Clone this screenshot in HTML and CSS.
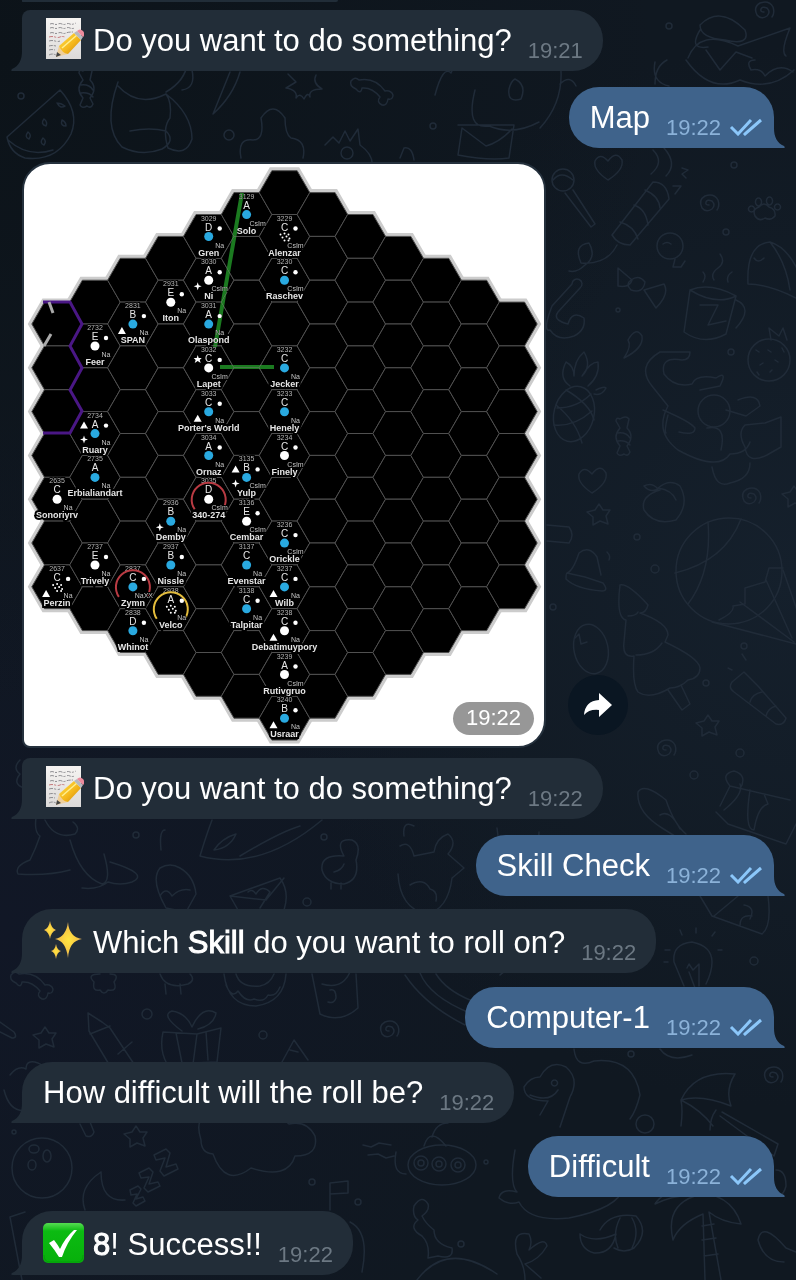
FILE: index.html
```html
<!DOCTYPE html>
<html lang="en">
<head>
<meta charset="utf-8">
<meta name="viewport" content="width=device-width, initial-scale=1">
<title>Chat</title>
<link rel="stylesheet" href="styles.css">
</head>
<body>
<svg class="defs" width="0" height="0" aria-hidden="true">
  <defs>
    <linearGradient id="pencil" x1="0" y1="0" x2="1" y2="1"><stop offset="0" stop-color="#ffe04a"/><stop offset=".55" stop-color="#f5b81c"/><stop offset="1" stop-color="#c9830c"/></linearGradient>
    <linearGradient id="paper" x1="0" y1="0" x2="0" y2="1"><stop offset="0" stop-color="#f6f4f2"/><stop offset="1" stop-color="#dcdad9"/></linearGradient>
    <radialGradient id="gold"><stop offset="0" stop-color="#ffe640"/><stop offset=".6" stop-color="#f8c944"/><stop offset="1" stop-color="#e5b25c"/></radialGradient>
    <linearGradient id="green" x1="0" y1="0" x2="0" y2="1"><stop offset="0" stop-color="#56dc52"/><stop offset=".2" stop-color="#0cbb12"/><stop offset="1" stop-color="#07b00b"/></linearGradient>
    <symbol id="memo" viewBox="0 0 41 42">
      <path d="M3 0h35v41H3z" fill="url(#paper)"/>
      <g fill="none" stroke="#77777c" stroke-width=".8" stroke-dasharray="4 1 2 1.500">
        <path d="M7 6q2-1 4 0t4 0 4 0 4 0 4 0 6-1M7 10q2-1 4 0t4 0 4 0 4 0 4 0 5 0M7 15q2-1 4 0t4 0 4 0 4 0 7-1M6 23q3-1 6 0t5 0M6 28q3-1 7 0M6 32q3-1 6 0M6 37q3-2 7 0"/>
        <path d="M6 19q3-1 6 0t5 0 5 0" stroke="#bd5d62"/>
      </g>
      <path d="M13 39l3-11 9 8z" fill="#efcf9b"/><path d="M13 39l1-5 4 3z" fill="#444"/>
      <path d="M16 28L31 15l7 7-13 14q-6-1-9-8z" fill="url(#pencil)"/>
      <path d="M19 30l15-13" stroke="#ffef8f" stroke-width="1.500"/>
      <path d="M31 15l3-2 6 6-2 3z" fill="#b6b9bf"/><path d="M34 13q3-3 6 0t0 6z" fill="#ed8b9c"/>
    </symbol>
    <symbol id="sparkles" viewBox="0 0 41 42">
      <g fill="url(#gold)"><path d="M25 2q1 15 14 17-13 2-14 19-2-17-13-19 11-2 13-17z"/><path d="M7 1q1 7 6 9-5 2-6 9-1-7-6-9 5-2 6-9z"/><path d="M13 24q1 6 5 7-4 1-5 8-1-7-5-8 4-1 5-7z"/></g>
    </symbol>
    <symbol id="done" viewBox="0 0 41 42">
      <rect x="0" y="1" width="41" height="40" rx="5" fill="url(#green)"/>
      <path d="M1 33q0 7 6 7h27q6 0 6-7" fill="none" stroke="#04900a" opacity=".6"/>
      <path d="M6 21l5-3q4 5 6 9Q22 16 31 8l3 0Q24 20 19 35l-3 0Q11 27 6 21z" fill="#fff"/>
    </symbol>
    <symbol id="ticks" viewBox="0 0 34 18">
      <path d="M2 9l7 7L22 2M15 15l1 1L32 2" fill="none" stroke="#8bc7fa" stroke-width="3"/>
    </symbol>
  </defs>
</svg>

<main class="chat">
  <svg class="wallpaper" viewBox="0 0 796 1280" preserveAspectRatio="xMidYMin slice" aria-hidden="true">
    <defs>
      <path id="d-star" d="M0-10l4 6 7 0-4 6 2 8-8-3-7 4 0-8-6-5 8-2z"/>
      <path id="d-swirl" d="M1 2q-4 0-3-3t6-1q4 4 0 8-6 4-10-1-4-8 3-12 9-3 13 4 2 6-1 10"/>
      <path id="d-heart" d="M0 13Q-15 3-13-6-8-15 0-6 8-17 14-7 16 3 0 13z"/>
      <path id="d-bone" d="M-18-7q-7-3-5-8 4-5 8-1 16-3 26 11 6-1 8 4 0 5-5 4-1 7-6 6-6-3-2-8-8-10-18-9-1 7-6 1z"/>
      <path id="d-candy" d="M-5-9l-4-7q0-4 4-2 6-4 9 0l-2 9q8 8 0 18l3 6q-2 5-6 2-5 3-7-1l3-7q-8-9 0-18zM-7-4q8-1 12 5M-7 4q8-1 12 4"/>
      <path id="d-paw" d="M-10 9q-3-7 4-9 5-6 10 0 7 2 6 9-4 5-10 2-6 4-10-2zM-14-1a3 3 0 1 0 1 0M-7-9a3 4 0 1 0 1 0M4-10a3 4 0 1 0 1 0M12-3a3 3 0 1 0 1 0"/>
      <path id="d-cloud" d="M-60-6q-9-28 18-26 22-6 32 8 17-18 38 2 18-4 26 12 4 20-20 20-7 24-44 12-26 20-38-14-12-1-12-14z"/>
    </defs>
    <!-- top -->
    <path d="M7 137L60 90q20 22 11 44-14 28-46 24-15-5-18-21zM8 140q20 18 45 10M44 119q4 3 2 7-6-2-2-7zM62 120q4 2 4 6-6 0-4-6zM28 132q4 3 1 7-5-2-1-7zM43 138q4 3 1 7-5-2-1-7zM57 103q4 0 8 3-5 3-8-3"/>
    <use href="#d-candy" x="88" y="89"/>
    <path d="M118 82q-16 45 4 65 20 10 40 2 14-8 4-18-16-4-36 0M118 86q20 22 48 8 26 20 26 45-6 18-24 9-6-20 2-30 2-16-4-24M176 20q28 50-10 72M192 70q4 18-10 20M230 72l-17 42q20-18 27-42"/>
    <path d="M288 74l8 8-10 6q12 2 10 10 4-6 8 1 4-8 6-2-2-8 12-8-10-6-6-14"/>
    <use href="#d-bone" x="374" y="96"/>
    <path d="M241 158q-4-20 12-18 12 0 8-22 12-18 24 0 0 16 6 20 16 2 12 20M325 145l8-8 6 6 6-12 5 10 8-12 2 16q14 10 12 22M341 153a6 6 0 1 0 12 0 6 6 0 1 0-12 0M435 95q8-30 16-22 4-12 18-4M475 90q-10 40 14 36 24 10 50-4M560 60q6 40-20 68M515 79q12 6 6 20-14 4-12-10 2-8 6-10M458 125h56l-5 33q-20 3-51-3l4-27 24 18q14-4 26-17M400 158l4-10q8-2 10 12M560 84q10-10 16 2"/>
    <path d="M700 25q20-20 45 5 6 16-20 10-25-2-25-15zM700 30q-12 20 8 17M688 58q12-30 50-12l52-18q-10 24-4 28M686 60q24 34 54 20 30 12 54-10M706 50l14 20 16-18 16 6M755 60q-10 0-4 10 10-2 14 6 14-14 28-4M655 62q-4 20 14 24M655 84q0-18 12-24"/>
    <use href="#d-heart" x="608" y="167"/><use href="#d-swirl" x="763" y="10"/><use href="#d-swirl" x="708" y="203"/><use href="#d-paw" x="765" y="207"/>
    <circle cx="563" cy="180" r="11"/><path d="M553 180q8-10 20 0M565 193l26 34 4-3-22-34M612 235l41-53q14 0 16 17l-39 46q-12 0-18-10zM620 222q14 4 18 17M634 205q12 4 14 20M645 190q14 6 15 18M617 245q-10 20-36 18-8-18 8-20 8 14-4 22-8 8-16 6"/>
    <path d="M653 150q12 12-2 24M664 148q14 16 2 28M682 168l6 2-6 4 4 4M673 186l8 0-6 8"/>
    <circle cx="670" cy="246" r="13"/><path d="M663 244q4-3 8 0M675 259l-2 8 8 0 4-6M618 268l14 12q-2 8-14 6zM644 290l20-6q6 10-8 24zM631 280q8-6 14 2-2 12-14 8-6-6 0-10"/>
    <path d="M748 284q-2-40 22-42 20 6 32 38M748 284q20 0 48 14M770 242q16 20 20 48M754 258q4 6 10 0"/>
    <!-- right column -->
    <path d="M690 290l-6 42q20 14 42 2l10-38M690 290q20-8 46 6-20 10-46-6M736 300q18 8 0 28M700 305l18 0-10 20 18-4M703 282q4-6 0-10M714 280q-4-6 4-12t2-14M728 282q-2-6 4-10"/>
    <path d="M550 330q-8 2 2-24l20-22a5 5 0 1 1 8 4l-22 24q-6 8 10 12 4-14 16-6 2 12-10 18-16 6-24-6M628 340q8-14 14-4 2 12-18 22 8-12 4-18z"/>
    <path d="M690 352h-30q-24 14-8 34l16 20q-14 26 10 44 40 22 52 4 16 0 20-12M690 352q0 8-8 8-22-4-18 14 10 14 28 10 4-10 24-6 12-8 4 8l-20 4M707 428q20-4 14 22M663 410q28 12 32 18 0 8-16 4M668 415q-4 16-2 18M745 425l20-2 16-6 0 30-14 8q-20 10-22-8-8-14 0-22M738 400q20-8 22 6l-14 10-20-6M712 467q4 22 18 16 20-4 20-20"/>
    <circle cx="714" cy="411" r="16"/><circle cx="769" cy="360" r="21"/><path d="M771 340l-2-12 10 8 4-8 4 12M756 350l3 2M768 350l3 2M760 365l3-2M775 360l3 2M770 372l2-2M782 348l2 4M757 372l2 3"/>
    <ellipse cx="574" cy="414" rx="20" ry="28" transform="rotate(14 574 414)"/><path d="M556 405q20 16 26 38M566 390q24 14 28 30M554 425q20 2 38-14M557 408q20 0 34-14M570 386q-12-8-4-24 8 4 8 14 0-16 10-24 8 14-2 24 8-14 16-14 2 14-10 24M596 390q8-4 10-2-4 8-12 6"/>
    <use href="#d-candy" x="625" y="437"/><use href="#d-heart" x="592" y="480"/><use href="#d-star" x="599" y="514"/><use href="#d-swirl" x="750" y="496"/><use href="#d-star" x="794" y="496"/>
    <path d="M660 490q-20 6-16 20 10 16 32 10 14-16 4-34-10-8-22 2 14 2 18 12M644 486q8-4 14 3-8 4-14-3M547 525l22 2q6 8 0 16l-22-2"/>
    <circle cx="729" cy="571" r="53"/><path d="M708 522q4 50-20 82M741 519q-16 42-66 54M719 620q16-8 14-14l12-2 0-16 20-6 4-14 14 0M783 570l14 40M766 580l26 58M740 602l54 40M712 622l84 22"/>
    <path d="M567 573l18 4 18 6q6 8-1 8-26-2-36-12 0-6 1-6q6-2 12-20 10-8 18 4 4 18 4 18M607 552q4 4 2 8"/>
    <ellipse cx="591" cy="649" rx="17" ry="25" transform="rotate(-12 591 649)"/><path d="M575 638l4-4 2 10 6-2"/>
    <path d="M620 585q8-2 28 20-2 8-8 8 28 10 28 22l-3 7q34 16 35 26 0 10-12 12-8 8-18 8-20 12-32 4-6-8-4-36-12 2-10-14l2-22q-10-2-6-35M628 616q8 0 10-4M636 655q18 0 26-12M668 690l14 20 8-6-9-19M732 682l12-10 14 14 28 32q-2 8-10 6l-42-32q-6-4-2-10zM762 692q-10 2-12 10M776 706q-8 2-10 10M742 654l4 6M728 668l4 2"/>
    <use href="#d-star" x="708" y="725"/><use href="#d-swirl" x="665" y="748"/>
    <!-- lower part -->
    <path d="M20 760q-8 8 0 14-8 10 4 14-4 10 6 14-4 12 6 16-2 14 4 18-4 12-10 24-16 6-12 14 30 2 52-4M45 820q10 20 30 14 6-6-2-12M70 840q10 36 32 44 10-2 2-30M110 862q40 12 22 20-12 4-24 0-10 8-26 6M165 830q-6 0-4 20M212 820q-6 16-12 36 60 16 122-36M214 850q8-12 22-16-6 14-22 16M240 856q40-24 60-30"/>
    <path d="M180 868q14 8 16 26l-10 18-20-4q-16-28-6-40 10-6 20 0zM160 896q6-10 12 0 8-8 18-6M230 896l50-18q10 14 4 32M230 896l8 14M248 892q4-4 8 2 6-10 14-2l-10 16M230 896l36 4 18-22M322 870q-2-16 22-14-10-18 8-16 10 4 4 20 4 20-12 24-18 0-22-14zM331 883v6M341 883v6M334 872q8-2 10-8"/>
    <path d="M400 846q10-6 14 10l20-4q2-14 14-18 10 8 0 20l16 14-12 10q-4 32-26 36-26-6-28-40M410 885q14-8 20 4 8 2 6 12M414 826q-12-6-10 10M497 828q4 40 20 34 22 0 22-30"/>
    <path d="M638 792q6-10 28 8 8 24 20 34M638 792q-2 20 24 36l16 10M660 815q10-6 20 14M720 806l10-20 60 14M716 812l12 12 58 20 10-20M730 786q-10-12 4-15 14 4 6 18M724 810q20-16 16-26M750 790q-6 40 4 40 4-24 14-26l-4-10"/>
    <path d="M700 896l12 20 50 18q10-8 6-38M714 916l24-20M740 926q0-12 12-10M744 905q12 2 6 14M684 986l-10-24q-2-18 18-20 20 4 20 20 0 10-6 22M687 968l2-4 4 6 6-6 0 22M689 972l6 16M696 928v5M680 930l2 5M665 950h5M664 962h4M718 950h4M712 936l3-4"/>
    <use href="#d-bone" x="34" y="990"/><path d="M100 974q-14 0-6 8-2 10 6 8 4 6 8 0 10 2 6-8 6-8-4-8M160 974q6 16 28 10 8-4 2-10M165 984l1 10M180 984l1 10"/>
    <path d="M224 974q4 32 32 32 28-4 30-32M236 974q4 14 24 12 10-2 14-12M226 985q6 14 12 6 8 12 16 8 10 4 14-4 8 2 12-8M312 974l8 40q20 10 38-6l-2-34M322 984q20 6 28-12M330 990q6-2 6 8-2 6-8 4M405 975q20 30 60 50M420 973q10 24 50 40M436 974q10 16 34 26M500 975q8-8 20-5M500 990l-20 10"/>
    <use href="#d-star" x="45" y="1037"/><path d="M0 1022l14 10q4 6-2 6l-12-6M88 1013l14 9 8 6 24 36M88 1013l1 18 24 40M90 1034q10-4 20-8M118 1054l14-12M163 1032l34 2 24-6-4 34-50 2q-8-14-4-32zM197 1034l-4 30M176 1033l6 30M182 1031q-22-16-10-20 14 2 20 16 10-22 24-14-2 12-18 16M206 1032l2 28M282 1062l12-22 14 20M290 1050l8 2"/>
    <use href="#d-swirl" x="388" y="1029"/><use href="#d-swirl" x="772" y="1075"/>
    <circle cx="42" cy="1168" r="30"/><ellipse cx="34" cy="1149" rx="5" ry="4"/><ellipse cx="47" cy="1156" rx="4" ry="6"/><ellipse cx="32" cy="1165" rx="4" ry="5"/>
    <path d="M80 1124l6 12q6 2 8-4l-4-10M10 1075q8-10 16-6 0-10 12-6 6 2 4 8M4 1090q6 24 24 20M101 1172q-24 16-16 38M101 1172q0 30 24 28M130 1190l8-4 3 3-5 10 7-2 2 4-9 5-3-3 4-9-6 1zM139 1173l10-5 4 4-4 12 9-2 2 4-12 6-4-4 5-11-8 1zM154 1155l12-6 4 4-4 14 10-3 2 5-14 7-4-5 5-13-9 2z"/>
    <use href="#d-star" x="136" y="1136"/><use href="#d-cloud" x="261" y="1146"/>
    <path d="M363 1145l8 2 8-4 12 2M368 1155l10-1 8 4 8-2M330 1210v-27l18-2v12l-18 1M350 1222q20 10 12 50M10 1217l15-5M10 1217l12 63M396 1152q-4 22 10 22"/>
    <ellipse cx="442" cy="1165" rx="34" ry="20"/><path d="M424 1146q6-20 22 0M432 1137q4-14 16-14"/>
    <g><circle cx="421" cy="1163" r="7"/><circle cx="439" cy="1164" r="7"/><circle cx="458" cy="1165" r="7"/><circle cx="421" cy="1163" r="3"/><circle cx="439" cy="1164" r="3"/><circle cx="458" cy="1165" r="3"/></g>
    <path d="M414 1206q8-12 14-2 2 6-6 12 4 8 12 14 0 14 18 18 2 12-14 8l-10 2q2-14-6-22-14-8-4-16-6-4-4-14M417 1280q30-40 80-6M525 1280q0-14-8-26-6-24 12-20 4 8 0 16 16-14 18-4-8 14-22 18l16 14"/>
    <path d="M540 1115l8-14q-24 0-24-14 6-10 16-10 10-18 26-10 14 12 4 30l-10 30M554 1080a3 3 0 1 0 1 0M530 1095q20 8 28-5M574 1049q2 20 20 12 40-4 46 34-4 16-10 24M515 1150q-6 34 2 42-16-4-18 6 10 8 20 4 10 20 50 16 50-10 54-30M660 1049q10 14 32 6"/>
    <circle cx="645" cy="1124" r="9"/><path d="M735 1074q-40-4-54 26 2 10 0 26M681 1100q20-6 50 6-6-16 4-32M681 1100q20 10 32 26M716 1110q-6 8-6 20M722 1112l56 32-4 12-54-40"/>
    <path d="M580 1234q14 10 36 0-4 20-22 19-14-4-14-19M600 1230q10-18 36-14 14 16-2 32-10 6-20 0M620 1218q-8 16-2 30M632 1218q8 14 0 30M705 1280l-2-66q-24 10-30 26-8-34 22-44-20-2-40 8 10-16 36-12 40 0 50 32-20-2-32-12l12 68M702 1226l12-2M702 1240l14-2M704 1256l14-2M758 1240q4-20 28 8l10 4M758 1240q6 22 26 22M770 1190q12 12 16-4 0-16-10-16"/>
    <!-- specks -->
    <g><circle cx="21" cy="96" r="3"/><circle cx="229" cy="135" r="5"/><circle cx="433" cy="126" r="3"/><circle cx="669" cy="26" r="3"/><circle cx="734" cy="165" r="3"/><circle cx="726" cy="232" r="3"/><circle cx="618" cy="310" r="2"/><circle cx="731" cy="352" r="3"/><circle cx="637" cy="537" r="3"/><circle cx="655" cy="569" r="4"/><circle cx="553" cy="607" r="3"/><circle cx="744" cy="646" r="3"/><circle cx="706" cy="683" r="3"/><circle cx="740" cy="753" r="4"/><circle cx="136" cy="835" r="3"/><circle cx="324" cy="837" r="3"/><circle cx="307" cy="902" r="4"/><circle cx="694" cy="775" r="4"/><circle cx="754" cy="961" r="4"/><circle cx="147" cy="1014" r="5"/><circle cx="263" cy="1035" r="4"/><circle cx="14" cy="1132" r="2"/><circle cx="312" cy="1182" r="3"/><circle cx="358" cy="1202" r="3"/><circle cx="461" cy="1244" r="3"/><circle cx="486" cy="1162" r="2"/><circle cx="631" cy="1054" r="3"/></g>
  </svg>

  <div class="thread">
    <div class="cutoff"></div>

    <div class="row">
      <article class="bubble bubble--in bubble--joined">
        <p class="text"><svg class="emoji" role="img" aria-label="memo"><use href="#memo"/></svg>Do you want to do something?</p>
        <time class="time">19:21</time>
      </article>
    </div>

    <div class="row row--out row--wide">
      <article class="bubble bubble--out">
        <p class="text">Map</p>
        <time class="time">19:22</time><svg class="ticks" role="img" aria-label="Read"><use href="#ticks"/></svg>
      </article>
    </div>

    <div class="row row--photo">
      <figure class="photo">
        <svg id="map" class="map" viewBox="24 165 520 582" role="img" aria-label="Star map"></svg>
        <time class="photo-time">19:22</time>
      </figure>
      <button class="forward" type="button" aria-label="Forward">
        <svg viewBox="0 0 30 26"><path d="M16 1l13 12-13 12v-7Q6 17 1 23 2 9 16 8z" fill="#fff"/></svg>
      </button>
    </div>

    <div class="row row--tight">
      <article class="bubble bubble--in bubble--joined">
        <p class="text"><svg class="emoji" role="img" aria-label="memo"><use href="#memo"/></svg>Do you want to do something?</p>
        <time class="time">19:22</time>
      </article>
    </div>

    <div class="row row--out row--wide">
      <article class="bubble bubble--out">
        <p class="text">Skill Check</p>
        <time class="time">19:22</time><svg class="ticks" role="img" aria-label="Read"><use href="#ticks"/></svg>
      </article>
    </div>

    <div class="row row--near">
      <article class="bubble bubble--in bubble--tall">
        <p class="text"><svg class="emoji" role="img" aria-label="sparkles"><use href="#sparkles"/></svg>Which <strong>Skill</strong> do you want to roll on?</p>
        <time class="time">19:22</time>
      </article>
    </div>

    <div class="row row--out">
      <article class="bubble bubble--out">
        <p class="text">Computer-1</p>
        <time class="time">19:22</time><svg class="ticks" role="img" aria-label="Read"><use href="#ticks"/></svg>
      </article>
    </div>

    <div class="row">
      <article class="bubble bubble--in">
        <p class="text">How difficult will the roll be?</p>
        <time class="time">19:22</time>
      </article>
    </div>

    <div class="row row--out row--near">
      <article class="bubble bubble--out">
        <p class="text">Difficult</p>
        <time class="time">19:22</time><svg class="ticks" role="img" aria-label="Read"><use href="#ticks"/></svg>
      </article>
    </div>

    <div class="row">
      <article class="bubble bubble--in bubble--tall">
        <p class="text"><svg class="emoji" role="img" aria-label="check mark"><use href="#done"/></svg><strong>8</strong>! Success!!</p>
        <time class="time">19:22</time>
      </article>
    </div>
  </div>
</main>
<script src="map.js"></script>
</body>
</html>
```
FILE: styles.css
```css
* {
  box-sizing: border-box;
}

body {
  margin: 0;
  background: #101923;
  color: #fff;
  font-family: "Liberation Sans", Arial, sans-serif;
}

.defs {
  position: absolute;
}

.chat {
  position: relative;
  min-height: 100vh;
  overflow: hidden;
  background:
    radial-gradient(circle at 0 4%, #0c1319 0, transparent 45%),
    radial-gradient(circle at 100% 45%, #15202c 0, transparent 50%),
    radial-gradient(circle at 0 72%, #111726 0, transparent 45%),
    #101821;
}

.wallpaper {
  position: absolute;
  inset: 0;
  width: 100%;
  height: 100%;
  fill: none;
  stroke: #202b38;
  stroke-width: 1.5;
  stroke-linecap: round;
  stroke-linejoin: round;
}

.thread {
  position: relative;
  padding: 0 22px 4px;
}

.cutoff {
  width: 42%;
  height: 2px;
  margin-bottom: 8px;
  border-radius: 0 0 20px 4px;
  background: #212d38;
}

.row {
  display: flex;
  margin-top: 14px;
}

.cutoff + .row {
  margin-top: 0;
}

.row--out {
  justify-content: flex-end;
}

.row--wide {
  margin-top: 16px;
}

.row--near {
  margin-top: 13px;
}

.row--tight {
  margin-top: 10px;
}

.row--photo {
  align-items: flex-end;
  gap: 22px;
}

.bubble {
  position: relative;
  display: flex;
  align-items: flex-end;
  padding: 13px 20px 8px 21px;
  border-radius: 30px;
}

.bubble--in {
  border-bottom-left-radius: 0;
  background: #222d38;
}

.bubble--joined {
  border-top-left-radius: 8px;
}

.bubble--out {
  padding-right: 11px;
  border-bottom-right-radius: 0;
  background: #3f638b;
}

.bubble--tall {
  padding-top: 16px;
}

.bubble::after {
  content: "";
  position: absolute;
  bottom: 0;
  width: 12px;
  height: 20px;
  background: inherit;
}

.bubble--in::after {
  left: -11px;
  clip-path: path("M12 0H11C11 9 8 15 1 18Q-1 20 2 20H12Z");
}

.bubble--out::after {
  right: -11px;
  clip-path: path("M0 0H1C1 9 4 15 11 18Q13 20 10 20H0Z");
}

.text {
  margin: 0;
  padding-bottom: 4px;
  font-size: 31px;
  line-height: 36px;
}

.text strong {
  font-weight: 400;
  -webkit-text-stroke: 1px currentColor;
}

.emoji {
  width: 41px;
  height: 42px;
  margin: -8px 9px -4px 0;
  vertical-align: -5px;
}

.time {
  margin-left: 16px;
  color: #6c7883;
  font-size: 22px;
  line-height: 24px;
}

.bubble--out .time {
  color: #8bb2d9;
}

.ticks {
  width: 34px;
  height: 18px;
  margin: 0 0 4px 8px;
}

.photo {
  position: relative;
  flex: 0 1 524px;
  margin: 0;
  overflow: hidden;
  border: 2px solid #25313d;
  border-radius: 28px 28px 28px 8px;
  background: #fff;
}

.photo-time {
  position: absolute;
  right: 10px;
  bottom: 11px;
  padding: 2px 13px 3px;
  border-radius: 17px;
  background: #979797;
  font-size: 22px;
  line-height: 28px;
}

.forward {
  display: grid;
  flex: none;
  place-items: center;
  width: 60px;
  height: 60px;
  margin-bottom: 13px;
  padding: 0;
  border: 0;
  border-radius: 50%;
  background: #0a1622;
}

.forward svg {
  width: 30px;
  height: 26px;
}

.map {
  display: block;
  width: 100%;
  font-family: "Liberation Sans", Arial, sans-serif;
  text-anchor: middle;
}

.map .rim {
  fill: #ccc;
  stroke: #ccc;
  stroke-width: 7;
}

.map .hex {
  fill: #000;
  stroke: #505050;
  stroke-width: 1;
}

.map .route {
  fill: none;
  stroke: #1b7a20;
  stroke-width: 4;
  mix-blend-mode: lighten;
}

.map .border {
  fill: none;
  stroke: #4a1785;
  stroke-width: 3;
}

.map .link {
  stroke: #aaa;
  stroke-width: 3;
}

.map .zone {
  fill: none;
  stroke-width: 2;
}

.map .zone--red {
  stroke: #b93b43;
}

.map .zone--amber {
  stroke: #e3bc3c;
}

.map text {
  fill: #e6e6e6;
  stroke: #000;
  stroke-width: 2px;
  paint-order: stroke;
}

.map .number {
  fill: #b4b4b4;
  font-size: 7px;
}

.map .port {
  font-size: 10px;
}

.map .ally {
  fill: #c4c4c4;
  font-size: 7px;
}

.map .name {
  font-size: 9px;
  font-weight: 700;
  stroke-width: 4px;
}

.map .water {
  fill: #29a9e0;
}

.map .mark {
  fill: #fff;
}
```
FILE: map.js
```js
// Hex grid: flat-topped cells, columns 26 to 38, six rings round the centre.
const R = 25.3, STEP_X = 37.9, CELL_H = 43.8, MID = 32;

const centre = (col, row) => {
  const top = (col % 2 ? 281.2 : 303.1) + (row - 31) * CELL_H;
  return [284.5 + (col - MID) * STEP_X, top];
};

const hexPath = (x, top) => {
  const h = CELL_H / 2, a = R / 2, y = top + h;
  return `M${x - R} ${y}L${x - a} ${top}H${x + a}L${x + R} ${y}L${x + a} ${top + CELL_H}H${x - a}Z`;
};

// number, starport, world (w water, d dry, a asteroids), gas giant, allegiance, name, bases, zone
const worlds = [
  [2635, "C", "d", 0, "Na", "Sonoriyrv"],
  [2637, "C", "a", 1, "Na", "Perzin", "t"],
  [2732, "E", "d", 1, "Na", "Feer"],
  [2734, "A", "w", 1, "Na", "Ruary", "Tx"],
  [2735, "A", "w", 0, "Na", "Erbialiandart"],
  [2737, "E", "d", 1, "Na", "Trively"],
  [2831, "B", "w", 1, "Na", "SPAN", "t"],
  [2837, "C", "w", 1, "NaXX", "Zymn", "", "red"],
  [2838, "D", "w", 1, "Na", "Whinot"],
  [2931, "E", "d", 1, "Na", "Iton"],
  [2936, "B", "w", 0, "Na", "Demby", "x"],
  [2937, "B", "w", 1, "Na", "Nissle"],
  [2938, "A", "a", 1, "Na", "Velco", "", "amber"],
  [3029, "D", "w", 1, "Na", "Gren"],
  [3030, "A", "d", 1, "CsIm", "Ni", "x"],
  [3031, "A", "w", 1, "Na", "Olaspond"],
  [3032, "C", "d", 1, "CsIm", "Lapet", "S"],
  [3033, "C", "w", 1, "Na", "Porter's World", "t"],
  [3034, "A", "w", 1, "Na", "Ornaz"],
  [3035, "D", "d", 0, "CsIm", "340-274", "", "red"],
  [3129, "A", "w", 0, "CsIm", "Solo"],
  [3135, "B", "w", 1, "CsIm", "Yulp", "Tx"],
  [3136, "E", "d", 1, "CsIm", "Cembar"],
  [3137, "C", "w", 0, "Na", "Evenstar"],
  [3138, "C", "w", 1, "Na", "Talpitar"],
  [3229, "C", "a", 1, "CsIm", "Alenzar"],
  [3230, "C", "w", 1, "CsIm", "Raschev"],
  [3232, "C", "w", 0, "Na", "Jecker"],
  [3233, "C", "w", 0, "Na", "Henely"],
  [3234, "C", "d", 1, "CsIm", "Finely"],
  [3236, "C", "w", 1, "CsIm", "Orickle"],
  [3237, "C", "w", 1, "Na", "Wilb", "t"],
  [3238, "C", "d", 1, "Na", "Debatimuypory", "t"],
  [3239, "A", "d", 1, "CsIm", "Rutivgruo"],
  [3240, "B", "w", 1, "Na", "Usraar", "t"]
];

const triangle = (x, y) => `<path class="mark" d="M${x} ${y - 4}l4 7h-8z"/>`;
const spark = (x, y) => `<path class="mark" d="M${x} ${y - 4}l1 3 3 1-3 1-1 3-1-3-3-1 3-1z"/>`;
const star = (x, y) => `<path class="mark" d="M${x} ${y - 4}l1 3h3l-2 2 1 3-3-2-3 2 1-3-2-2h3z"/>`;
const bases = {
  t: (x, y) => triangle(x - 11, y + 29),
  T: (x, y) => triangle(x - 11, y + 14),
  x: (x, y) => spark(x - 11, y + 28),
  S: (x, y) => star(x - 11, y + 13)
};

const cells = [];
for (let col = 26; col <= 38; col++) {
  const away = Math.abs(col - MID);
  const first = 28 + Math.floor(away / 2) + (away % 2);
  for (let i = 0; i < 13 - away; i++) cells.push(hexPath(...centre(col, first + i)));
}

const planet = (kind, x, y) => {
  if (kind !== "a") return `<circle class="${kind === "w" ? "water" : "mark"}" cx="${x}" cy="${y}" r="4.500"/>`;
  return [[-4, -2], [0, -3], [4, -2], [-2, 1], [2, 0], [5, 2], [0, 4], [4, 4]]
    .map(([dx, dy]) => `<circle class="mark" cx="${x + dx}" cy="${y + dy}" r="1"/>`).join("");
};

const world = ([id, port, kind, gas, ally, name, marks = "", zone]) => {
  const [x, top] = centre(Math.floor(id / 100), id % 100);
  const cy = top + 22;
  return `<text class="number" x="${x}" y="${top + 6}">${id}</text>` +
    (zone ? `<path class="zone zone--${zone}" d="M${x - 14} ${cy + 10}A17 17 0 1 1 ${x + 14} ${cy + 10}"/>` : "") +
    `<text class="port" x="${x}" y="${top + 16}">${port}</text>` +
    `<text class="name" x="${x}" y="${top + 41}">${name}</text>` +
    `<text class="ally" x="${x + 11}" y="${top + 33}">${ally}</text>` +
    planet(kind, x, cy) +
    (gas ? `<circle class="mark" cx="${x + 11}" cy="${top + 14}" r="2.200"/>` : "") +
    [...marks].map(m => bases[m](x, top)).join("");
};

document.getElementById("map").innerHTML =
  cells.map(d => `<path class="rim" d="${d}"/>`).join("") +
  cells.map(d => `<path class="hex" d="${d}"/>`).join("") +
  `<path class="border" d="M43 303H70L82 325 70 347 82 369 70 391 82 412 70 434H43"/>
   <path class="link" d="M49 303l4 11M51 335l-7 12"/>` +
  worlds.map(world).join("") +
  `<path class="route" d="M242 194L215 348M220 368H274"/>`;
```
